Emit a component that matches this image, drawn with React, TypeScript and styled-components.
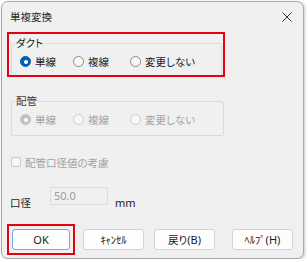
import React from "react";
import styled, { createGlobalStyle } from "styled-components";

const Global = createGlobalStyle`
  html, body { margin: 0; padding: 0; background: #ffffff; }
  body { font-family: "Noto Sans CJK JP", "Noto Sans", sans-serif; }
  * { box-sizing: border-box; }
`;

const Window = styled.div`
  margin: 1px 0 0 1px;
  width: 303px;
  height: 258px;
  background: #f0f0f0;
  border: 1px solid #a9a9a9;
  border-radius: 7px;
  box-shadow: 1px 1px 3px rgba(0, 0, 0, 0.22);
  display: flex;
  flex-direction: column;
  overflow: hidden;
  color: #1b1b1b;
  font-size: 10.5px;
  font-feature-settings: "palt";
`;

const TitleBar = styled.div`
  height: 30px;
  display: flex;
  align-items: center;
  justify-content: space-between;
  padding: 0 8px 1px 8px;
  flex-shrink: 0;
`;

const Title = styled.span`
  font-size: 10.5px;
  color: #2a2a2a;
`;

const CloseBtn = styled.span`
  display: flex;
  width: 10px;
  height: 10px;
  margin-right: 3px;
`;

const Highlight = styled.div<{ $w: number; $h: number }>`
  width: ${(p) => p.$w}px;
  height: ${(p) => p.$h}px;
  border: 2px solid #e60010;
  flex-shrink: 0;
  overflow: hidden;
`;

const HighlightTop = styled(Highlight)`
  margin-left: 5px;
  padding: 1px 0 0 2px;
`;

const HighlightBtn = styled(Highlight)`
  padding: 3px;
`;

const Group = styled.fieldset<{ $h: number }>`
  margin: 0;
  padding: 0;
  border: 1px solid #dadada;
  border-radius: 2px;
  height: ${(p) => p.$h}px;
  min-width: 0;
`;

const Group1 = styled(Group)`
  width: 211px;
`;

const Group2 = styled(Group)`
  margin: 16px 0 0 9px;
  width: 213px;
  flex-shrink: 0;
`;

const Legend = styled.legend<{ $disabled?: boolean }>`
  margin-left: 3px;
  padding: 0 1px;
  line-height: 16px;
  font-size: 10.5px;
  color: ${(p) => (p.$disabled ? "#3a3a3a" : "#1b1b1b")};
`;

const RadioRow = styled.div`
  display: grid;
  grid-template-columns: 53px 57px auto;
  align-items: center;
  height: 21px;
  padding-left: 8px;
`;

const RadioItem = styled.label<{ $disabled?: boolean }>`
  display: flex;
  align-items: center;
  gap: 4px;
  color: ${(p) => (p.$disabled ? "#a3a3a3" : "#1b1b1b")};
  white-space: nowrap;
`;

const RadioDot = styled.span<{ $checked?: boolean; $disabled?: boolean }>`
  position: relative;
  width: 11px;
  height: 11px;
  border-radius: 50%;
  flex-shrink: 0;
  background: ${(p) =>
    p.$checked ? (p.$disabled ? "#c2c2c2" : "#005fb8") : "#f7f7f7"};
  border: 1px solid
    ${(p) =>
      p.$checked ? (p.$disabled ? "#c2c2c2" : "#005fb8") : p.$disabled ? "#cbcbcb" : "#8a8a8a"};
  &::after {
    content: "";
    display: ${(p) => (p.$checked ? "block" : "none")};
    position: absolute;
    left: 2.5px;
    top: 2.5px;
    width: 4px;
    height: 4px;
    border-radius: 50%;
    background: #ffffff;
  }
`;

const CheckRow = styled.label`
  margin: 18px 0 0 9px;
  height: 16px;
  display: flex;
  align-items: center;
  gap: 4px;
  color: #a3a3a3;
  flex-shrink: 0;
`;

const CheckBox = styled.span`
  width: 10px;
  height: 10px;
  border: 1px solid #c6c6c6;
  border-radius: 2px;
  background: #f7f7f7;
`;

const DiameterRow = styled.div`
  margin: 17px 0 0 8px;
  height: 18px;
  display: flex;
  align-items: flex-end;
  flex-shrink: 0;
`;

const FieldLabel = styled.span`
  width: 40px;
  line-height: 14px;
  margin-bottom: -5px;
`;

const Input = styled.div`
  width: 58px;
  height: 18px;
  border: 1px solid #dcdcdc;
  background: #f0f0f0;
  color: #9c9c9c;
  font-family: "Noto Sans", sans-serif;
  font-size: 11px;
  line-height: 15px;
  padding-left: 3px;
`;

const Unit = styled.span`
  margin: 0 0 -5px 7px;
  font-family: "Noto Sans", sans-serif;
  font-size: 11px;
  line-height: 14px;
`;

const ButtonRow = styled.div`
  margin: 19px 0 0 5px;
  display: flex;
  align-items: center;
  flex-shrink: 0;
`;

const Button = styled.div<{ $primary?: boolean; $ml?: number }>`
  width: ${(p) => (p.$primary ? 58 : 61)}px;
  height: 21px;
  margin-left: ${(p) => p.$ml ?? 0}px;
  border: 1px solid ${(p) => (p.$primary ? "#7aa7d6" : "#d3d3d3")};
  border-radius: 3px;
  background: #fdfdfd;
  display: flex;
  align-items: center;
  justify-content: center;
  font-size: 10.5px;
  color: #1b1b1b;
  white-space: nowrap;
`;

const Latin = styled.span`
  font-family: "Noto Sans", sans-serif;
  font-size: 11px;
`;

type RadioProps = { label: string; checked?: boolean; disabled?: boolean };
const Radio = ({ label, checked, disabled }: RadioProps) => (
  <RadioItem $disabled={disabled}>
    <RadioDot $checked={checked} $disabled={disabled} />
    {label}
  </RadioItem>
);

export default function App() {
  return (
    <>
      <Global />
      <Window>
        <TitleBar>
          <Title>単複変換</Title>
          <CloseBtn>
            <svg width="10" height="10" viewBox="0 0 10 10">
              <path d="M0.5 0.5 L9.5 9.5 M9.5 0.5 L0.5 9.5" stroke="#333" strokeWidth="1" />
            </svg>
          </CloseBtn>
        </TitleBar>

        <HighlightTop $w={218} $h={45}>
          <Group1 $h={42}>
            <Legend>ダクト</Legend>
            <RadioRow>
              <Radio label="単線" checked />
              <Radio label="複線" />
              <Radio label="変更しない" />
            </RadioRow>
          </Group1>
        </HighlightTop>

        <Group2 $h={43}>
          <Legend $disabled>配管</Legend>
          <RadioRow>
            <Radio label="単線" checked disabled />
            <Radio label="複線" disabled />
            <Radio label="変更しない" disabled />
          </RadioRow>
        </Group2>

        <CheckRow>
          <CheckBox />
          配管口径値の考慮
        </CheckRow>

        <DiameterRow>
          <FieldLabel>口径</FieldLabel>
          <Input>50.0</Input>
          <Unit>mm</Unit>
        </DiameterRow>

        <ButtonRow>
          <HighlightBtn $w={68} $h={31}>
            <Button $primary>
              <Latin>OK</Latin>
            </Button>
          </HighlightBtn>
          <Button $ml={8}>ｷｬﾝｾﾙ</Button>
          <Button $ml={10}>
            戻り<Latin>(B)</Latin>
          </Button>
          <Button $ml={17}>
            ﾍﾙﾌﾟ<Latin>(H)</Latin>
          </Button>
        </ButtonRow>
      </Window>
    </>
  );
}
